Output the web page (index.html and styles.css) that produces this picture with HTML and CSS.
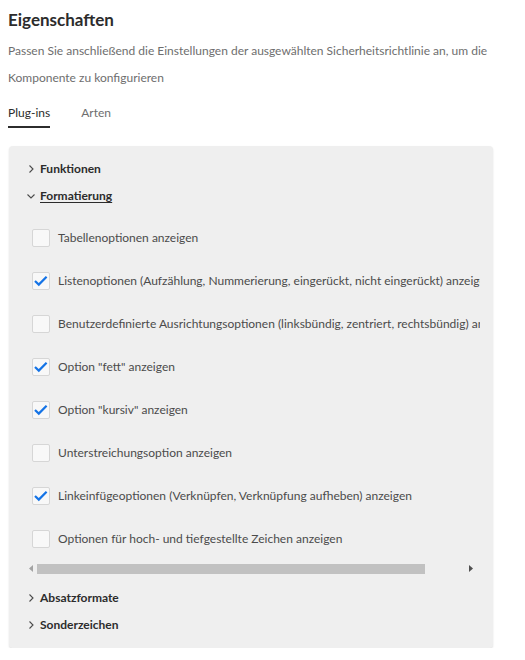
FILE: index.html
```html
<!DOCTYPE html>
<html lang="de">
<head>
<meta charset="utf-8">
<title>Eigenschaften</title>
<link rel="stylesheet" href="styles.css">
</head>
<body>
<div class="page">
  <h1 class="title">Eigenschaften</h1>
  <p class="desc">Passen Sie anschließend die Einstellungen der ausgewählten Sicherheitsrichtlinie an, um die Komponente zu konfigurieren</p>
  <div class="tabs">
    <span class="tab active">Plug-ins</span>
    <span class="tab">Arten</span>
  </div>
  <div class="panel">
    <div class="acc-row">
      <svg class="chev" width="8" height="10" viewBox="0 0 8 10"><path d="M2.5 1.5 L6 5 L2.5 8.5" fill="none" stroke="#4b4b4b" stroke-width="1.1"/></svg>
      <span class="acc-label">Funktionen</span>
    </div>
    <div class="acc-row">
      <svg class="chev" width="8" height="10" viewBox="0 0 8 10"><path d="M0.5 3.5 L4 7 L7.5 3.5" fill="none" stroke="#4b4b4b" stroke-width="1.1"/></svg>
      <span class="acc-label open">Formatierung</span>
    </div>
    <div class="scroll-area">
      <div class="cb-list">
        <div class="cb-row"><span class="cb"></span><span class="cb-text">Tabellenoptionen anzeigen</span></div>
        <div class="cb-row"><span class="cb"><svg width="18" height="18" viewBox="0 0 18 18"><path d="M3 9 L6.8 12.6 L14.6 4.8" fill="none" stroke="#1473e6" stroke-width="2.2"/></svg></span><span class="cb-text">Listenoptionen (Aufzählung, Nummerierung, eingerückt, nicht eingerückt) anzeigen</span></div>
        <div class="cb-row"><span class="cb"></span><span class="cb-text">Benutzerdefinierte Ausrichtungsoptionen (linksbündig, zentriert, rechtsbündig) anzeigen</span></div>
        <div class="cb-row"><span class="cb"><svg width="18" height="18" viewBox="0 0 18 18"><path d="M3 9 L6.8 12.6 L14.6 4.8" fill="none" stroke="#1473e6" stroke-width="2.2"/></svg></span><span class="cb-text">Option "fett" anzeigen</span></div>
        <div class="cb-row"><span class="cb"><svg width="18" height="18" viewBox="0 0 18 18"><path d="M3 9 L6.8 12.6 L14.6 4.8" fill="none" stroke="#1473e6" stroke-width="2.2"/></svg></span><span class="cb-text">Option "kursiv" anzeigen</span></div>
        <div class="cb-row"><span class="cb"></span><span class="cb-text">Unterstreichungsoption anzeigen</span></div>
        <div class="cb-row"><span class="cb"><svg width="18" height="18" viewBox="0 0 18 18"><path d="M3 9 L6.8 12.6 L14.6 4.8" fill="none" stroke="#1473e6" stroke-width="2.2"/></svg></span><span class="cb-text">Linkeinfügeoptionen (Verknüpfen, Verknüpfung aufheben) anzeigen</span></div>
        <div class="cb-row"><span class="cb"></span><span class="cb-text">Optionen für hoch- und tiefgestellte Zeichen anzeigen</span></div>
      </div>
      <div class="hscroll">
        <span class="sb-btn left"><svg width="4" height="7" viewBox="0 0 4 7"><path d="M4 0 L0 3.5 L4 7 Z" fill="#a3a3a3"/></svg></span>
        <span class="sb-track"><span class="sb-thumb"></span></span>
        <span class="sb-btn right"><svg width="4" height="7" viewBox="0 0 4 7"><path d="M0 0 L4 3.5 L0 7 Z" fill="#505050"/></svg></span>
      </div>
    </div>
    <div class="acc-row">
      <svg class="chev" width="8" height="10" viewBox="0 0 8 10"><path d="M2.5 1.5 L6 5 L2.5 8.5" fill="none" stroke="#4b4b4b" stroke-width="1.1"/></svg>
      <span class="acc-label">Absatzformate</span>
    </div>
    <div class="acc-row">
      <svg class="chev" width="8" height="10" viewBox="0 0 8 10"><path d="M2.5 1.5 L6 5 L2.5 8.5" fill="none" stroke="#4b4b4b" stroke-width="1.1"/></svg>
      <span class="acc-label">Sonderzeichen</span>
    </div>
  </div>
</div>
</body>
</html>
```
FILE: styles.css
```css
* { box-sizing: border-box; }
html, body { margin: 0; padding: 0; background: #ffffff; }
body {
  font-family: Lato, "Noto Sans", "Liberation Sans", sans-serif;
  color: #4b4b4b;
}
.page { padding: 0 8px; width: 525px; }
.title {
  margin: 0;
  height: 37px;
  line-height: 40px;
  font-size: 17px;
  font-weight: 700;
  color: #2c2c2c;
}
.desc {
  margin: 0;
  font-size: 12px;
  line-height: 27px;
  color: #6e6e6e;
  width: 480px;
}
.tabs {
  display: flex;
  gap: 31px;
}
.tab {
  padding: 13px 0 4px;
  line-height: 18px;
  font-size: 12px;
  color: #6e6e6e;
  border-bottom: 2px solid transparent;
}
.tab.active {
  color: #2c2c2c;
  border-bottom-color: #2c2c2c;
}
.panel {
  margin: 18px 0 0 1px;
  width: 484px;
  height: 502px;
  background: #efefef;
  border-radius: 4px;
  box-shadow: 0 1px 2px rgba(0,0,0,0.12);
  padding: 9px 0 0 0;
}
.acc-row {
  height: 27px;
  display: flex;
  align-items: center;
  padding-left: 18px;
}
.chev { margin-right: 5px; flex: none; }
.acc-label {
  font-size: 12px;
  font-weight: 700;
  color: #2c2c2c;
}
.acc-label.open { text-decoration: underline; text-underline-offset: 2px; }
.scroll-area {
  margin: 7px 0 0 19px;
  width: 452px;
}
.cb-list { overflow: hidden; }
.cb-row {
  height: 43px;
  display: flex;
  align-items: center;
  white-space: nowrap;
}
.cb {
  flex: none;
  width: 18px;
  height: 18px;
  margin-left: 4px;
  margin-right: 8px;
  background: #f8f8f8;
  border: 1px solid #d6d6d6;
  border-radius: 2px;
  display: flex;
  align-items: center;
  justify-content: center;
}
.cb svg { display: block; margin: -1px; }
.cb-text {
  font-size: 12px;
  color: #4b4b4b;
}
.hscroll {
  margin-top: 3px;
  height: 11px;
  display: flex;
  align-items: stretch;
}
.sb-btn {
  flex: none;
  display: flex;
  align-items: center;
}
.sb-btn.left { width: 9px; padding-left: 1px; }
.sb-btn.right { width: 15px; padding-left: 4px; }
.sb-track { flex: 1; display: flex; align-items: center; }
.sb-thumb { width: 388px; height: 10px; background: #c1c1c1; }
.panel > .scroll-area + .acc-row { margin-top: 10px; }
```
